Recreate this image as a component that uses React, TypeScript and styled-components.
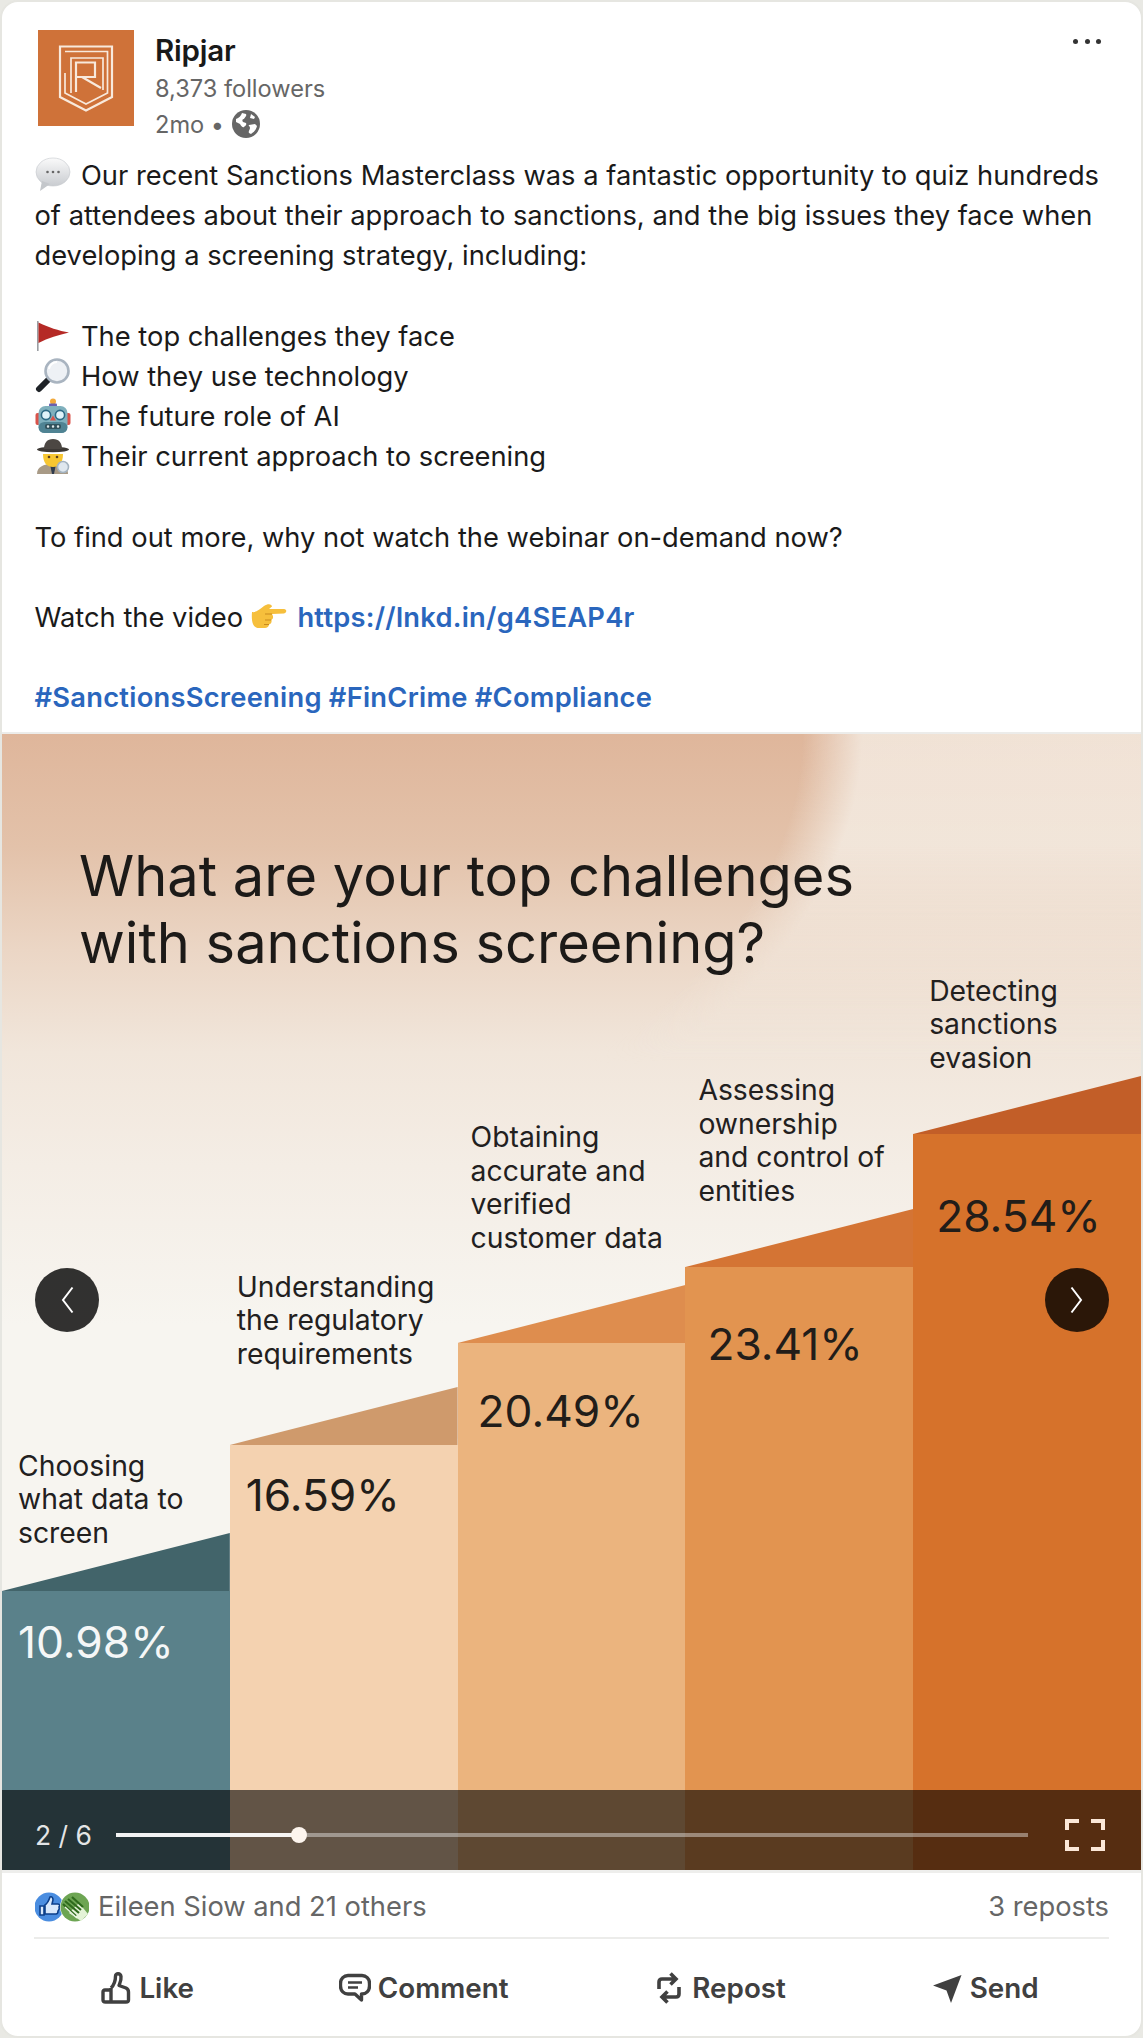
import React from "react";
import styled, { createGlobalStyle } from "styled-components";

const Global = createGlobalStyle`
  html, body { margin: 0; padding: 0; background: #e9e9e4; }
  * { box-sizing: border-box; }
  body { font-family: Inter, "Liberation Sans", sans-serif; -webkit-font-smoothing: antialiased; }
`;

const Card = styled.article`
  width: 1143px;
  height: 2038px;
  background: #fff;
  border: 2px solid #e6e6e1;
  border-radius: 18px;
  overflow: hidden;
  display: flex;
  flex-direction: column;
`;

const Header = styled.header`
  position: relative;
  display: flex;
  gap: 21px;
  padding: 28px 0 0 36px;
  height: 124px;
`;

const LogoBox = styled.svg`
  width: 96px;
  height: 96px;
  flex: none;
  display: block;
`;

const Who = styled.div`
  display: flex;
  flex-direction: column;
`;

const Name = styled.div`
  font-size: 29.5px;
  font-weight: 600;
  line-height: 41px;
  color: #191919;
  letter-spacing: -0.2px;
`;

const Meta = styled.div`
  display: flex;
  align-items: center;
  gap: 8px;
  font-size: 23.6px;
  line-height: 35.5px;
  color: #666;
`;

const MoreDots = styled.div`
  position: absolute;
  right: 40px;
  top: 37px;
  display: flex;
  gap: 6.5px;
  & > i {
    display: block;
    width: 5px;
    height: 5px;
    border-radius: 50%;
    background: #333;
  }
`;

const Body = styled.div`
  padding: 30px 0 0 32.5px;
  height: 608px;
  border-bottom: 2px solid #ececea;
  font-size: 27.3px;
  line-height: 40.2px;
  color: #1a1a1a;
`;

const Line = styled.div`
  white-space: pre;
  height: 40.2px;
`;

const Spacer = styled.div`
  height: 40.2px;
`;

const LinkText = styled.span`
  color: #2a66bd;
  font-weight: 600;
  letter-spacing: 0.25px;
`;

const Emo = styled.svg`
  display: inline-block;
  width: 36px;
  height: 36px;
  vertical-align: -8px;
  margin-right: 10.5px;
`;

const PointEmo = styled(Emo)`
  margin: 0 3px 0 0;
  vertical-align: -7px;
`;

const Slide = styled.section`
  position: relative;
  isolation: isolate;
  flex: none;
  height: 1136px;
  display: flex;
  flex-direction: column;
  background: linear-gradient(180deg, #dfb69b 0, #e3c2aa 10%, #ebd6c5 19%, #f1e6db 28%, #f4ede5 38%, #f7f5f0 52%);
  &::before {
    content: "";
    position: absolute;
    z-index: -1;
    inset: 0;
    background: radial-gradient(ellipse 860px 510px at 0 0, rgba(247, 243, 236, 0) 93%, rgba(247, 243, 236, 0.72) 100%);
    -webkit-mask-image: linear-gradient(180deg, #000 0, #000 110px, transparent 330px);
    mask-image: linear-gradient(180deg, #000 0, #000 110px, transparent 330px);
  }
`;

const Title = styled.h2`
  margin: 0;
  flex: none;
  height: 240px;
  padding: 108.5px 0 0 77px;
  font-size: 56px;
  font-weight: 400;
  line-height: 67.5px;
  color: #1c1a18;
`;

const Columns = styled.div`
  flex: 1;
  display: flex;
  align-items: flex-end;
`;

const Column = styled.div`
  flex: 1;
  display: flex;
  flex-direction: column;
`;

const Label = styled.div<{ $pad: number; $gap: number }>`
  padding-left: ${(p) => p.$pad}px;
  margin-bottom: ${(p) => p.$gap}px;
  font-size: 28.3px;
  line-height: 33.8px;
  color: #22201e;
  white-space: pre;
  position: relative;
  z-index: 1;
`;

const Wedge = styled.div<{ $color: string }>`
  height: 58px;
  background: ${(p) => p.$color};
  clip-path: polygon(0 100%, 100% 0, 100% 100%);
`;

const Bar = styled.div<{ $color: string; $h: number; $ink: string; $pad: number; $top: number }>`
  height: ${(p) => p.$h}px;
  background: ${(p) => p.$color};
  color: ${(p) => p.$ink};
  padding: ${(p) => p.$top}px 0 0 ${(p) => p.$pad}px;
  font-size: 44.3px;
  line-height: 52px;
`;

const RoundNav = styled.div<{ $side: "left" | "right" }>`
  position: absolute;
  top: 534px;
  ${(p) => p.$side}: ${(p) => (p.$side === "left" ? 33 : 32)}px;
  width: 64px;
  height: 64px;
  border-radius: 50%;
  background: rgba(0, 0, 0, 0.8);
  display: flex;
  align-items: center;
  justify-content: center;
`;

const Controls = styled.div`
  position: absolute;
  left: 0;
  right: 0;
  bottom: 0;
  height: 80px;
  background: rgba(0, 0, 0, 0.6);
  display: flex;
  align-items: center;
  padding: 10px 36px 0 33px;
`;

const Count = styled.span`
  width: 81px;
  font-size: 26.5px;
  color: rgba(255, 255, 255, 0.88);
  white-space: nowrap;
`;

const Track = styled.div`
  position: relative;
  width: 912px;
  height: 4px;
  background: rgba(255, 255, 255, 0.4);
`;

const Fill = styled.div`
  position: absolute;
  left: 0;
  top: 0;
  bottom: 0;
  background: rgba(255, 255, 255, 0.9);
`;

const Thumb = styled.div`
  position: absolute;
  top: -6px;
  width: 16px;
  height: 16px;
  margin-left: -8px;
  border-radius: 50%;
  background: #fdf5ee;
`;

const Full = styled.svg`
  width: 40px;
  height: 32px;
  margin-left: auto;
  display: block;
`;

const Social = styled.div`
  margin: 3px 32px 0;
  height: 63px;
  border-bottom: 2px solid #ececea;
  display: flex;
  align-items: center;
  justify-content: space-between;
  font-size: 27.3px;
  color: #666;
`;

const Rule = styled.div`
  height: 3px;
  background: #eeeeec;
`;

const Likes = styled.div`
  display: flex;
  align-items: center;
  gap: 9px;
  padding-left: 1px;
`;

const Reaction = styled.svg`
  display: block;
  width: 54px;
  height: 30px;
`;

const Actions = styled.div`
  display: flex;
  justify-content: space-around;
  align-items: center;
  margin: 0 30px 0 26px;
  flex: 1;
`;

const Action = styled.div`
  display: flex;
  align-items: center;
  gap: 7px;
  font-size: 27.8px;
  font-weight: 600;
  color: #404040;
`;

const ActionIcon = styled.svg`
  display: block;
  width: 32px;
  height: 32px;
`;

const Logo = () => (
  <LogoBox viewBox="0 0 96 96">
    <rect width="96" height="96" fill="#cf7239" />
    <g fill="none" stroke="#f8e9dc" strokeWidth="1.7">
      <path d="M22 16.5H74V67L48 80.5L22 67Z" strokeWidth="2.2" />
      <path d="M27 21.5H69.5V63L48 74L27 63V43" />
      <path d="M33 63V28H65V60" />
      <path d="M38 62V32.5H57V47H38M44 47L63 58" strokeWidth="2.2" />
    </g>
  </LogoBox>
);

const Globe = () => (
  <svg width="28" height="28" viewBox="0 0 28 28" style={{ display: "block" }}>
    <circle cx="14" cy="14" r="14" fill="#666" />
    <path d="M4 9c3-1 5-3 6-6l4 1c1 2-1 3-2 5-2 0-2 2-1 3l3 1c1 2-1 3-2 4s-3-1-4-3L4 12Z" fill="#fff" />
    <path d="M17 15l6-1 2 2c-1 4-3 6-6 8l-2-1c-1-2 1-3 1-5s-2-2-1-3ZM19 4l4 3-1 2-4-1Z" fill="#fff" />
  </svg>
);

const Bubble = () => (
  <Emo viewBox="0 0 36 36">
    <defs>
      <linearGradient id="bub" x1="0" y1="0" x2="0" y2="1">
        <stop offset="0" stopColor="#fafafa" />
        <stop offset="1" stopColor="#c9ccd0" />
      </linearGradient>
    </defs>
    <ellipse cx="18" cy="15" rx="17" ry="14" fill="url(#bub)" stroke="#c5c8cc" strokeWidth="0.6" />
    <path d="M7 24L5 34L15 27Z" fill="#c4c7cb" />
    <circle cx="12.5" cy="15" r="1.3" fill="#666" />
    <circle cx="18" cy="15" r="1.3" fill="#666" />
    <circle cx="23.5" cy="15" r="1.3" fill="#666" />
  </Emo>
);

const Flag = () => (
  <Emo viewBox="0 0 36 36">
    <rect x="2" y="3" width="1.6" height="30" fill="#9a9ea3" />
    <path d="M3.5 4.5C13 9 24 13 34 14.5C24 17 13 20 3.5 25Z" fill="#b52a26" />
  </Emo>
);

const Lens = () => (
  <Emo viewBox="0 0 36 36">
    <path d="M15 20L4 31" stroke="#1f2328" strokeWidth="6" strokeLinecap="round" />
    <circle cx="22" cy="13" r="11.5" fill="#eef1f5" stroke="#a9b4c0" strokeWidth="2.6" />
    <path d="M14 11a8 8 0 0 1 8-7" stroke="#fff" strokeWidth="2" fill="none" />
  </Emo>
);

const Robot = () => (
  <Emo viewBox="0 0 36 36">
    <circle cx="18" cy="3.5" r="3" fill="#f2a93b" />
    <rect x="14" y="5.5" width="8" height="3" rx="1" fill="#6a5fb0" />
    <rect x="0.5" y="15" width="5" height="12" rx="2" fill="#d9534a" />
    <rect x="30.5" y="15" width="5" height="12" rx="2" fill="#d9534a" />
    <rect x="3.5" y="8" width="29" height="27" rx="7" fill="#7fb0bd" />
    <rect x="3.5" y="24" width="29" height="11" rx="6" fill="#4f8393" />
    <circle cx="11" cy="17" r="4.6" fill="#dff3fa" stroke="#2d6a85" strokeWidth="1.6" />
    <circle cx="25" cy="17" r="4.6" fill="#dff3fa" stroke="#2d6a85" strokeWidth="1.6" />
    <path d="M18 17.5l3 5h-6Z" fill="#d9534a" />
    <rect x="10" y="26" width="16" height="5" rx="2" fill="#32525c" />
    <path d="M13 28.5h.1M18 28.5h.1M23 28.5h.1" stroke="#dfe8ea" strokeWidth="2.4" strokeLinecap="round" />
  </Emo>
);

const Detective = () => (
  <Emo viewBox="0 0 36 36">
    <path d="M2 36c0-7 6-10 16-10s15 3 15 10Z" fill="#a89a86" />
    <path d="M15 26h6l-2 10h-2Z" fill="#2f3b4c" />
    <path d="M8 16c0 9 4 13 10 13s10-4 10-13Z" fill="#f7c631" />
    <ellipse cx="18" cy="11.5" rx="16" ry="2.8" fill="#3c3835" />
    <path d="M9 11c0-6 3-10 9-10s9 4 9 10Z" fill="#4c4743" />
    <circle cx="14" cy="19" r="1.3" fill="#5a3d1a" />
    <circle cx="22" cy="19" r="1.3" fill="#5a3d1a" />
    <circle cx="28" cy="29" r="5.5" fill="#dfe7ee" stroke="#a4b3c0" strokeWidth="1.6" />
  </Emo>
);

const Pointing = () => (
  <PointEmo viewBox="0 0 36 36">
    <path d="M1 14C5 15 9 11 13 8C17 5 21 6 21 8.5L18 11H33C36 11 36 15 33 15.5L21 16C23 19 22 21 20.5 22C21 24 20 26 18 26.5C18 28.5 16 30 14 30H8C3 30 0 26 1 14Z" fill="#f6bf3c" />
    <path d="M14 16h7M14 22h6M13 26.5h5" stroke="#c98a1d" strokeWidth="1" fill="none" />
  </PointEmo>
);

const ChevronLeft = () => (
  <svg width="14" height="28" viewBox="0 0 14 28">
    <path d="M12.5 1.5L3 14L12.5 26.5" fill="none" stroke="#fff" strokeWidth="2" />
  </svg>
);

const ChevronRight = () => (
  <svg width="14" height="28" viewBox="0 0 14 28">
    <path d="M1.5 1.5L11 14L1.5 26.5" fill="none" stroke="#fff" strokeWidth="2" />
  </svg>
);

const FullIcon = () => (
  <Full viewBox="0 0 40 32">
    <path d="M14 2H2V11M26 2H38V11M14 30H2V21M26 30H38V21" fill="none" stroke="#fbe7d8" strokeWidth="4" />
  </Full>
);

const ReactionIcons = () => (
  <Reaction viewBox="0 0 54 30">
    <circle cx="14" cy="15" r="14.5" fill="#4a8de0" />
    <path d="M5 14H9V23H5ZM10 13c3-2 4-5 5-8c2-1 3 1 3 3l-1 4h6c2 0 2 2 1 3c1 2 0 3-1 4c0 2-1 3-2 3H10Z" fill="#d8e8fb" stroke="#0c3f8a" strokeWidth="1.6" />
    <circle cx="40" cy="15" r="15" fill="#fff" />
    <circle cx="40" cy="15" r="14.5" fill="#6da553" />
    <path d="M34 21L46 29L53 22L44 11Z" fill="#e4f3d7" />
    <path d="M28 12l13 12M30 9l14 12M33 7l13 11M37 5l11 10" stroke="#2e6b1c" strokeWidth="2.2" fill="none" />
    <path d="M30 15l12 11" stroke="#eef7e6" strokeWidth="1.2" fill="none" />
  </Reaction>
);

const LikeIcon = () => (
  <ActionIcon viewBox="0 0 32 32">
    <path
      d="M11 16C14 13 15.5 8 15.5 4C15.5 1 20.5 1 21 4.5C21.5 8 20 11 19 13.5L26 16C28 17 28.5 18 28.5 20V28C28.5 29.5 27.5 30 26 30H11M11 16V30M11 18H5C3.5 18 3 19 3 20V28C3 29.5 4 30 5.5 30H11"
      fill="none"
      stroke="#404040"
      strokeWidth="3.4"
      strokeLinejoin="round"
    />
  </ActionIcon>
);

const CommentIcon = () => (
  <ActionIcon viewBox="0 0 32 32">
    <path
      d="M9 3.5H23C27 3.5 30.5 6.5 30.5 11.5V14C30.5 19 27 22 23 22H22.5V28L16 22H9C5 22 1.5 19 1.5 14V11.5C1.5 6.5 5 3.5 9 3.5Z"
      fill="none"
      stroke="#404040"
      strokeWidth="3.4"
      strokeLinejoin="round"
    />
    <path d="M9 10.5H23M9 15.5H19" stroke="#404040" strokeWidth="2.6" />
  </ActionIcon>
);

const RepostIcon = () => (
  <ActionIcon viewBox="0 0 32 32">
    <path
      d="M6 17V10C6 8 7 7 9 7H22M17.5 1.5L23 7L17.5 12.5M26 15V22C26 24 25 25 23 25H10M14.5 19.5L9 25L14.5 30.5"
      fill="none"
      stroke="#404040"
      strokeWidth="3.6"
    />
  </ActionIcon>
);

const SendIcon = () => (
  <ActionIcon viewBox="0 0 32 32">
    <path d="M30.5 3L20 31L15.5 18.5L2 13.5Z" fill="#404040" />
  </ActionIcon>
);

const columns = [
  { label: "Choosing\nwhat data to\nscreen", pct: "10.98%", h: 279, gap: -18, lp: 16, pp: 16, top: 25, bar: "#5a818a", wedge: "#42646a", ink: "#f5f7f7" },
  { label: "Understanding\nthe regulatory\nrequirements", pct: "16.59%", h: 425, gap: 15, lp: 7, pp: 16, top: 24, bar: "#f4d2b0", wedge: "#cf9a6c", ink: "#221d19" },
  { label: "Obtaining\naccurate and\nverified\ncustomer data", pct: "20.49%", h: 527, gap: 29, lp: 13, pp: 20, top: 42, bar: "#ebb47e", wedge: "#de8d4e", ink: "#221d19" },
  { label: "Assessing\nownership\nand control of\nentities", pct: "23.41%", h: 603, gap: 0, lp: 13, pp: 22, top: 51, bar: "#e29450", wedge: "#d47434", ink: "#221d19" },
  { label: "Detecting\nsanctions\nevasion", pct: "28.54%", h: 736, gap: 0, lp: 16, pp: 23, top: 56, bar: "#d6722b", wedge: "#c25e28", ink: "#221d19" },
];

export default function App() {
  return (
    <>
      <Global />
      <Card>
        <Header>
          <Logo />
          <Who>
            <Name>Ripjar</Name>
            <Meta>8,373 followers</Meta>
            <Meta>
              2mo • <Globe />
            </Meta>
          </Who>
          <MoreDots>
            <i />
            <i />
            <i />
          </MoreDots>
        </Header>
        <Body>
          <Line>
            <Bubble />
            Our recent Sanctions Masterclass was a fantastic opportunity to quiz hundreds
          </Line>
          <Line>of attendees about their approach to sanctions, and the big issues they face when</Line>
          <Line>developing a screening strategy, including:</Line>
          <Spacer />
          <Line>
            <Flag />
            The top challenges they face
          </Line>
          <Line>
            <Lens />
            How they use technology
          </Line>
          <Line>
            <Robot />
            The future role of AI
          </Line>
          <Line>
            <Detective />
            Their current approach to screening
          </Line>
          <Spacer />
          <Line>To find out more, why not watch the webinar on-demand now?</Line>
          <Spacer />
          <Line>
            Watch the video <Pointing /> <LinkText>https://lnkd.in/g4SEAP4r</LinkText>
          </Line>
          <Spacer />
          <Line>
            <LinkText>#SanctionsScreening #FinCrime #Compliance</LinkText>
          </Line>
        </Body>
        <Slide>
          <Title>
            What are your top challenges
            <br />
            with sanctions screening?
          </Title>
          <Columns>
            {columns.map((c) => (
              <Column key={c.pct}>
                <Label $pad={c.lp} $gap={c.gap}>
                  {c.label}
                </Label>
                <Wedge $color={c.wedge} />
                <Bar $color={c.bar} $h={c.h} $ink={c.ink} $pad={c.pp} $top={c.top}>
                  {c.pct}
                </Bar>
              </Column>
            ))}
          </Columns>
          <RoundNav $side="left">
            <ChevronLeft />
          </RoundNav>
          <RoundNav $side="right">
            <ChevronRight />
          </RoundNav>
          <Controls>
            <Count>2 / 6</Count>
            <Track>
              <Fill style={{ width: `${(183 / 912) * 100}%` }} />
              <Thumb style={{ left: `${(183 / 912) * 100}%` }} />
            </Track>
            <FullIcon />
          </Controls>
        </Slide>
        <Rule />
        <Social>
          <Likes>
            <ReactionIcons />
            <span>Eileen Siow and 21 others</span>
          </Likes>
          <span>3 reposts</span>
        </Social>
        <Actions>
          <Action>
            <LikeIcon />
            Like
          </Action>
          <Action>
            <CommentIcon />
            Comment
          </Action>
          <Action>
            <RepostIcon />
            Repost
          </Action>
          <Action>
            <SendIcon />
            Send
          </Action>
        </Actions>
      </Card>
    </>
  );
}
